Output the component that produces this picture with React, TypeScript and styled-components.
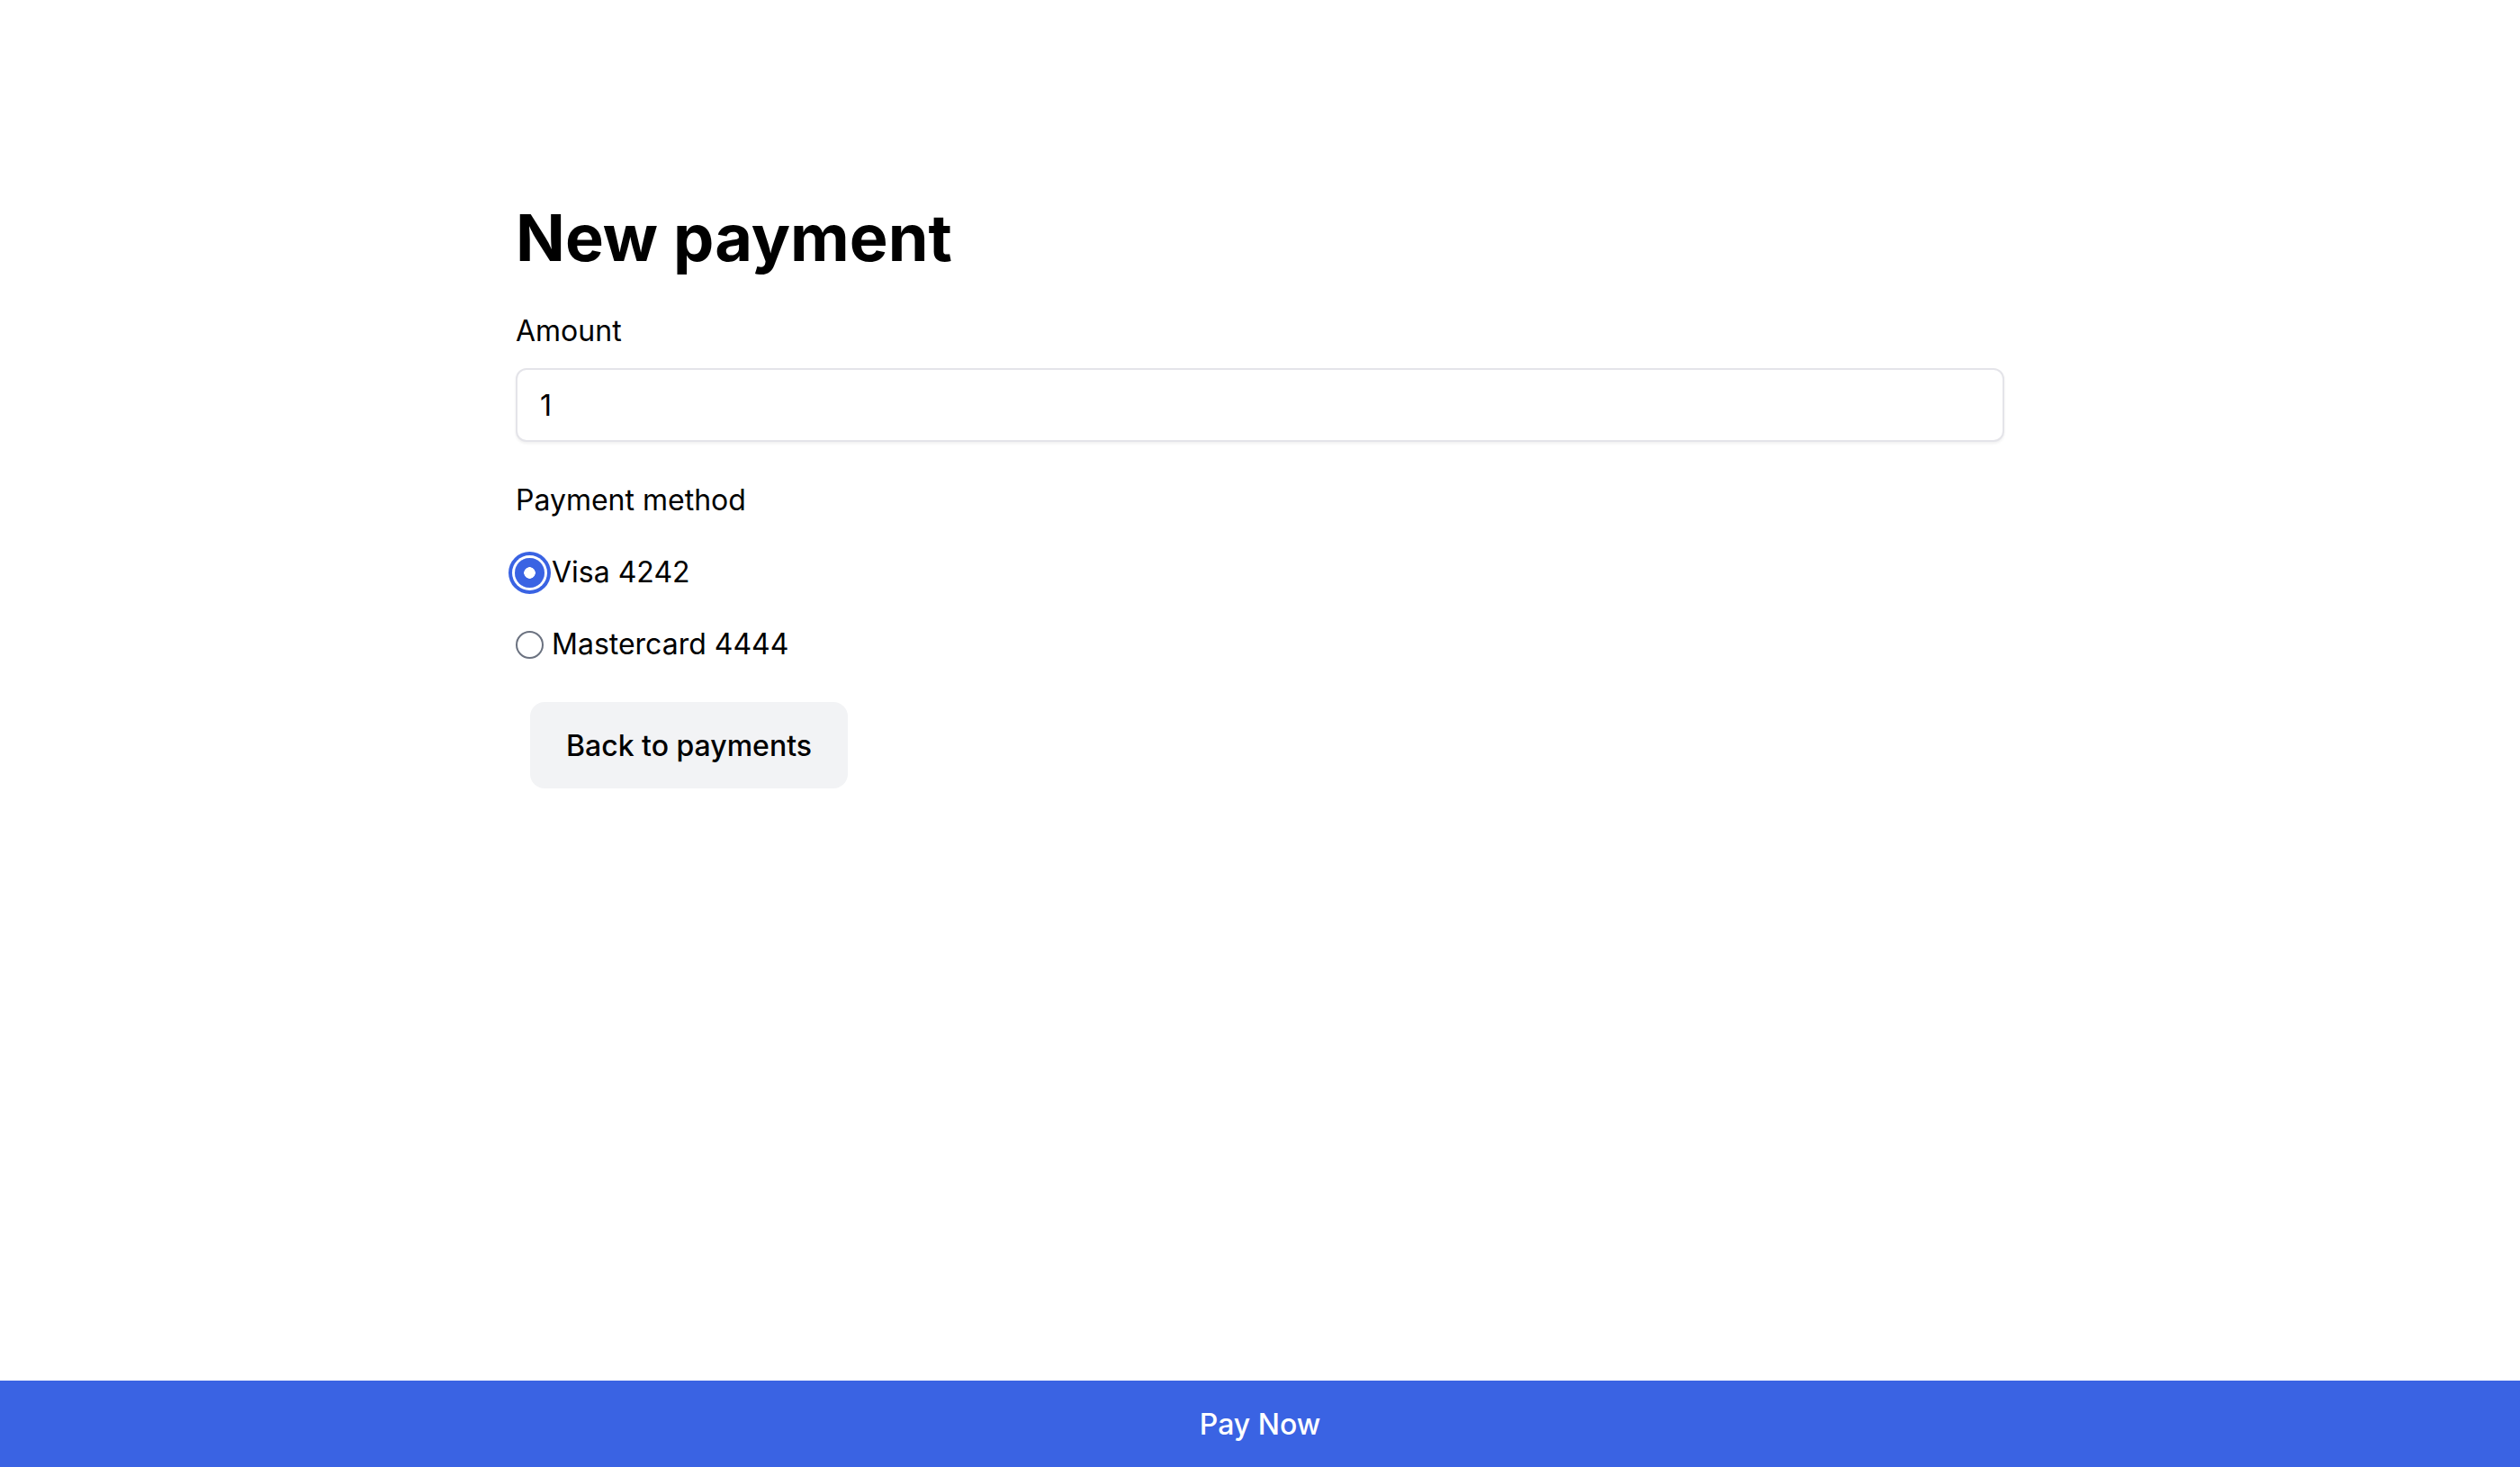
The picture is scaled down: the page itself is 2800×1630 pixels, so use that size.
import React, { useState } from 'react'
import styled, { createGlobalStyle } from 'styled-components'

const GlobalStyle = createGlobalStyle`
  html, body {
    margin: 0;
    padding: 0;
    background: #ffffff;
  }
  body {
    font-family: Inter, "Noto Sans", sans-serif;
    color: #000000;
  }
`

interface Method {
  id: string;
  label: string;
}

const methods: Method[] = [
  { id: 'visa', label: 'Visa 4242' },
  { id: 'mc', label: 'Mastercard 4444' },
]

const Page = styled.div`
  min-height: 100vh;
  display: flex;
  flex-direction: column;
`

const Main = styled.main`
  flex: 1;
  padding-top: 220px;
`

const Form = styled.div`
  width: 1654px;
  margin-left: calc(50% - 827px);
  display: flex;
  flex-direction: column;
  align-items: flex-start;
`

const Title = styled.h1`
  margin: 0;
  font-size: 72px;
  line-height: 88px;
  font-weight: 700;
  letter-spacing: 0;
`

const Label = styled.label<{ $top: number }>`
  margin-top: ${(p) => p.$top}px;
  font-size: 32px;
  line-height: 38px;
`

const AmountInput = styled.input`
  margin-top: 22px;
  box-sizing: border-box;
  width: 100%;
  height: 82px;
  border: 2px solid #e4e4e9;
  border-radius: 12px;
  box-shadow: 0 2px 3px rgba(0, 0, 0, 0.06);
  padding: 0 25px;
  font-family: Inter, sans-serif;
  font-size: 32px;
  color: #000;
  outline: none;
`

const Options = styled.div`
  margin-top: 41px;
  display: flex;
  flex-direction: column;
  gap: 40px;
`

const Option = styled.label`
  display: flex;
  align-items: center;
  gap: 9px;
  height: 40px;
  font-size: 32px;
  line-height: 40px;
  cursor: pointer;
`

const Radio = styled.input`
  appearance: none;
  margin: 0;
  width: 31px;
  height: 31px;
  box-sizing: border-box;
  border-radius: 50%;
  border: 2px solid #6b7280;
  background: #fff;

  &:checked {
    border: none;
    width: 33px;
    height: 33px;
    margin-left: -1px;
    margin-right: -1px;
    background: radial-gradient(circle, #ffffff 0 6px, #3a63e3 6.5px);
    box-shadow: 0 0 0 3px #ffffff, 0 0 0 7px #3a63e3;
  }
`

const BackButton = styled.button`
  margin: 44px 0 0 16px;
  width: 353px;
  height: 96px;
  border: none;
  border-radius: 16px;
  background: #f2f3f5;
  font-family: Inter, sans-serif;
  font-size: 32px;
  font-weight: 500;
  color: #000;
  cursor: pointer;
`

const PayBar = styled.button`
  height: 96px;
  width: 100%;
  border: none;
  background: #3a63e3;
  color: #ffffff;
  font-family: Inter, sans-serif;
  font-size: 32px;
  font-weight: 500;
  cursor: pointer;
`

export default function App() {
  const [method, setMethod] = useState('visa')
  const [amount, setAmount] = useState('1')

  return (
    <Page>
      <GlobalStyle />
      <Main>
        <Form>
          <Title>New payment</Title>
          <Label $top={41}>Amount</Label>
          <AmountInput value={amount} onChange={(e) => setAmount(e.target.value)} />
          <Label $top={46}>Payment method</Label>
          <Options>
            {methods.map((m) => (
              <Option key={m.id}>
                <Radio
                  type="radio"
                  name="method"
                  checked={method === m.id}
                  onChange={() => setMethod(m.id)}
                />
                {m.label}
              </Option>
            ))}
          </Options>
          <BackButton>Back to payments</BackButton>
        </Form>
      </Main>
      <PayBar>Pay Now</PayBar>
    </Page>
  )
}
